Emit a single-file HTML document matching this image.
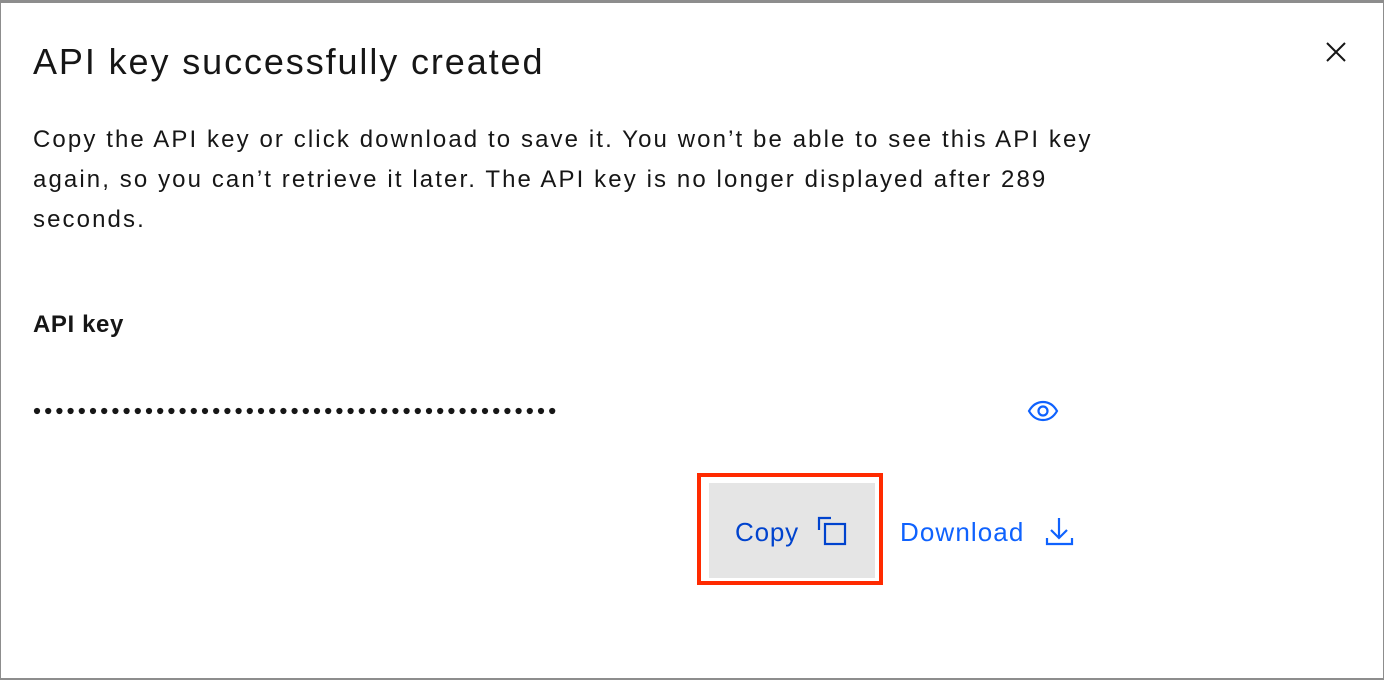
<!DOCTYPE html>
<html><head><meta charset="utf-8"><style>
html,body{margin:0;padding:0;}
body{width:1384px;height:680px;background:#8d8d8d;position:relative;overflow:hidden;font-family:"Liberation Sans",sans-serif;color:#161616;}
.modal{position:absolute;left:1px;top:3px;width:1382px;height:675px;background:#fff;}
.t{position:absolute;left:33px;top:41px;font-size:36px;letter-spacing:1.9px;white-space:nowrap;}
.p{position:absolute;left:33px;top:120px;font-size:24px;line-height:40px;white-space:nowrap;letter-spacing:2.1px;}
.k{position:absolute;left:33px;top:311px;font-size:24px;font-weight:bold;letter-spacing:0.6px;}
.red{position:absolute;left:697px;top:473px;width:178px;height:104px;border:4px solid #ff2a00;}
.gray{position:absolute;left:709px;top:483px;width:166px;height:95px;background:#e5e5e5;}
.copy{position:absolute;left:735px;top:517px;font-size:26px;color:#0043ce;letter-spacing:0.8px;}
.dl{position:absolute;left:900px;top:517px;font-size:26px;color:#0f62fe;letter-spacing:1.1px;}
</style></head><body>
<div class="modal"></div>
<div class="t">API key successfully created</div>
<svg style="position:absolute;left:1325px;top:41px" width="22" height="22"><path d="M2 2L20 20M20 2L2 20" stroke="#161616" stroke-width="2"/></svg>
<div class="p">Copy the API key or click download to save it. You won’t be able to see this API key<br>again, so you can’t retrieve it later. The API key is no longer displayed after 289<br>seconds.</div>
<div class="k">API key</div>
<svg style="position:absolute;left:30px;top:405px" width="540" height="14" id="dots"></svg>
<svg style="position:absolute;left:1027px;top:400px" width="32" height="22"><path d="M2 11C6 4 11 2 16 2S26 4 30 11C26 18 21 20 16 20S6 18 2 11Z" fill="none" stroke="#0f62fe" stroke-width="2.2"/><circle cx="16" cy="11" r="4.5" fill="none" stroke="#0f62fe" stroke-width="2.2"/></svg>
<div class="red"></div>
<div class="gray"></div>
<div class="copy">Copy</div>
<svg style="position:absolute;left:817px;top:516px" width="32" height="32"><path d="M2 14V2H14" fill="none" stroke="#0043ce" stroke-width="2.2"/><rect x="8" y="8" width="20" height="20" fill="none" stroke="#0043ce" stroke-width="2.2"/></svg>
<div class="dl">Download</div>
<svg style="position:absolute;left:1045px;top:516px" width="30" height="32"><path d="M14 2V22M6 14L14 22L22 14M2 22V28H27V22" fill="none" stroke="#0f62fe" stroke-width="2.2"/></svg>
<script>
var s=document.getElementById('dots'),h='';
for(var i=0;i<47;i++){h+='<circle cx="'+(7+i*11.2)+'" cy="6" r="3.1" fill="#161616"/>';}
s.innerHTML=h;
</script>
</body></html>
